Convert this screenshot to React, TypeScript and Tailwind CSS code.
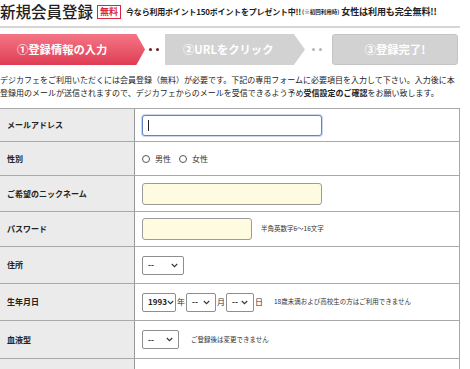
import React from "react";

const font = { fontFamily: '"Noto Sans CJK JP", "Noto Sans", sans-serif' };

const Chevron = () => (
	<svg width="7" height="5" viewBox="0 0 7 5" className="shrink-0">
		<path d="M0.8 1 L3.5 3.7 L6.2 1" fill="none" stroke="#333" strokeWidth="1.1" />
	</svg>
);

const Select = ({ value, width }: { value: string; width: string }) => (
	<div
		className={`flex h-[19px] ${width} items-center justify-between rounded-[2px] border border-[#8e8e8e] bg-white px-[5px] text-[8px] font-bold text-[#222]`}
	>
		<span>{value}</span>
		<Chevron />
	</div>
);

const Row = ({ label, h, children }: { label: string; h: string; children?: React.ReactNode }) => (
	<div className={`flex ${h} border-b border-[#a9a9a9]`}>
		<div className="flex w-[135px] shrink-0 items-center border-r border-[#9a9a9a] bg-[#ebebeb] pl-[7px] text-[8px] font-bold text-[#222]">
			{label}
		</div>
		<div className="flex flex-1 items-center gap-2 bg-white pl-[7px] text-[#333]">{children}</div>
	</div>
);

const Radio = ({ label }: { label: string }) => (
	<span className="flex items-center gap-[5px] text-[8px]">
		<span className="inline-block h-[8px] w-[8px] rounded-full border border-[#555] bg-white" />
		{label}
	</span>
);

export default function App() {
	return (
		<div className="h-[369px] w-[470px] overflow-hidden bg-white text-[#222]" style={font}>
			<div className="mr-[10px] flex h-[28px] items-center border-b-[2px] border-[#d6d6d6] pb-[2px]">
				<h1 className="text-[15.5px] leading-none font-medium text-[#222]">新規会員登録</h1>
				<span className="ml-[4px] border border-[#d9263c] px-[2px] text-[9px] leading-[12px] font-bold text-[#d9263c]">
					無料
				</span>
				<span className="ml-[5px] text-[8px] font-bold tracking-[-0.2px]">
					今なら利用ポイント150ポイントをプレゼント中!!
				</span>
				<span className="ml-[1px] text-[5.5px] font-bold">(※初回利用時)</span>
				<span className="ml-[2px] text-[9px] font-bold tracking-[-0.1px]">女性は利用も完全無料!!</span>
			</div>

			<div className="mt-[6px] flex h-[31px] items-center">
				<div className="flex h-full w-[145px] items-center bg-gradient-to-b from-[#f47585] to-[#df3b55] pl-[17px] text-[11.3px] font-bold text-white [clip-path:polygon(0_0,94%_0,100%_50%,94%_100%,0_100%)]">
					①登録情報の入力
				</div>
				<div className="ml-[4px] flex w-[16px] gap-[4px]">
					<span className="h-[3px] w-[3px] rounded-full bg-[#6b1a24]" />
					<span className="h-[3px] w-[3px] rounded-full bg-[#6b1a24]" />
				</div>
				<div className="flex h-full w-[140px] items-center bg-[#d2d2d2] pl-[18px] text-[11.3px] font-bold text-white [clip-path:polygon(0_0,92%_0,100%_50%,92%_100%,0_100%)]">
					②URLをクリック
				</div>
				<div className="ml-[7px] flex w-[20px] gap-[4px]">
					<span className="h-[3px] w-[3px] rounded-full bg-[#b5b5b5]" />
					<span className="h-[3px] w-[3px] rounded-full bg-[#b5b5b5]" />
				</div>
				<div className="flex h-full w-[126px] items-center justify-center rounded-[3px] border border-[#c4c4c4] bg-[#d2d2d2] text-[11.3px] font-bold text-white">
					③登録完了!
				</div>
			</div>

			<div className="mt-[8px] pr-[10px] text-[8px] leading-[13px] text-[#222]">
				<p>デジカフェをご利用いただくには会員登録（無料）が必要です。下記の専用フォームに必要項目を入力して下さい。入力後に本</p>
				<p>
					登録用のメールが送信されますので、デジカフェからのメールを受信できるよう予め<b>受信設定のご確認</b>をお願い致します。
				</p>
			</div>

			<div className="mt-[9px] mr-[10px] border-t border-r border-[#a9a9a9]">
				<Row label="メールアドレス" h="h-[33px]">
					<div className="flex h-[21px] w-[180px] items-center rounded-[3px] border border-[#5f85c2] bg-white pl-[5px] shadow-[0_0_0_1px_#c9d8f0]">
						<span className="h-[11px] w-px bg-[#222]" />
					</div>
				</Row>
				<Row label="性別" h="h-[34px]">
					<Radio label="男性" />
					<Radio label="女性" />
				</Row>
				<Row label="ご希望のニックネーム" h="h-[36px]">
					<div className="h-[22px] w-[180px] rounded-[3px] border border-[#9b9b9b] bg-[#fffbe0]" />
				</Row>
				<Row label="パスワード" h="h-[35px]">
					<div className="h-[22px] w-[110px] rounded-[3px] border border-[#9b9b9b] bg-[#fffbe0]" />
					<span className="ml-[1px] text-[6.5px]">半角英数字6～16文字</span>
				</Row>
				<Row label="住所" h="h-[37px]">
					<Select value="--" width="w-[42px]" />
				</Row>
				<Row label="生年月日" h="h-[37px]">
					<div className="flex items-center text-[8px]">
						<Select value="1993" width="w-[34px]" />
						<span className="mx-[1px]">年</span>
						<Select value="--" width="w-[30px]" />
						<span className="mx-[1px]">月</span>
						<Select value="--" width="w-[28px]" />
						<span className="mx-[1px]">日</span>
						<span className="ml-[10px] text-[6.5px]">18歳未満および高校生の方はご利用できません</span>
					</div>
				</Row>
				<Row label="血液型" h="h-[38px]">
					<Select value="--" width="w-[37px]" />
					<span className="ml-[4px] text-[6.5px]">ご登録後は変更できません</span>
				</Row>
				<Row label="" h="h-[38px]" />
			</div>
		</div>
	);
}
